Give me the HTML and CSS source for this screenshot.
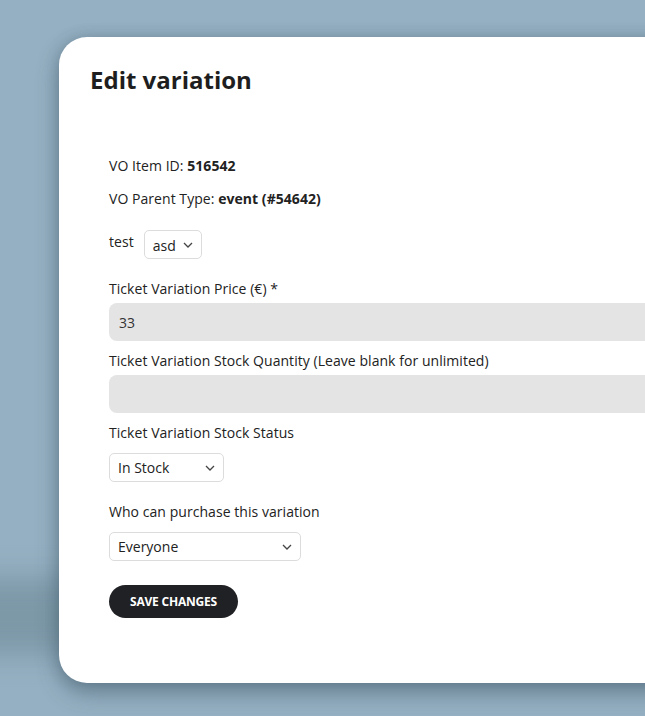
FILE: index.html
```html
<!DOCTYPE html>
<html lang="en">
<head>
<meta charset="UTF-8">
<meta name="viewport" content="width=device-width, initial-scale=1.0">
<link rel="stylesheet" href="styles.css">
</head>
<body>

<!-- page behind the modal, blurred -->
<div class="backdrop-band"></div>

<div class="modal">
  <h1 class="modal-title">Edit variation</h1>

  <form class="variation-form">
    <p class="meta">VO Item ID: <b>516542</b></p>
    <p class="meta">VO Parent Type: <b>event (#54642)</b></p>

    <div class="inline-field">
      <label>test</label>
      <span class="select select-small">
        <select><option>asd</option></select>
        <svg viewBox="0 0 10 6"><path d="M1 1l4 4 4-4"/></svg>
      </span>
    </div>

    <div class="field">
      <label>Ticket Variation Price (€) *</label>
      <input type="text" value="33">
    </div>

    <div class="field">
      <label>Ticket Variation Stock Quantity (Leave blank for unlimited)</label>
      <input type="text" value="">
    </div>

    <div class="field field-select">
      <label>Ticket Variation Stock Status</label>
      <span class="select select-stock">
        <select><option>In Stock</option></select>
        <svg viewBox="0 0 10 6"><path d="M1 1l4 4 4-4"/></svg>
      </span>
    </div>

    <div class="field field-select">
      <label>Who can purchase this variation</label>
      <span class="select select-who">
        <select><option>Everyone</option></select>
        <svg viewBox="0 0 10 6"><path d="M1 1l4 4 4-4"/></svg>
      </span>
    </div>

    <button type="button" class="save-btn">Save changes</button>
  </form>
</div>

</body>
</html>
```

FILE: styles.css
```css
html, body {
  margin: 0;
  height: 100%;
}
body {
  background: #95b0c2;
  font-family: "Open Sans", "Liberation Sans", sans-serif;
  color: #222;
  overflow: hidden;
  position: relative;
}
.backdrop-band {
  position: absolute;
  left: -40px;
  right: 0;
  top: 578px;
  height: 76px;
  background: #7d98a7;
  filter: blur(14px);
}
.modal {
  position: relative;
  margin: 37px 0 0 59px;
  width: 680px;
  height: 646px;
  box-sizing: border-box;
  padding: 27px 0 0 31px;
  background: #fff;
  border-radius: 28px 0 0 28px;
  box-shadow: 0 10px 22px rgba(50, 75, 92, 0.45), 0 0 14px rgba(60, 85, 100, 0.25);
}
.modal-title {
  margin: 0;
  font-size: 24px;
  line-height: 32px;
  font-weight: 700;
  color: #1e1e20;
}
.variation-form {
  padding: 60px 0 0 19px;
  font-size: 14px;
  line-height: 20px;
  letter-spacing: 0.05px;
}
.meta {
  margin: 0 0 13px;
}
.meta b {
  font-weight: 700;
}
.inline-field {
  display: flex;
  align-items: flex-start;
  gap: 10px;
  margin-top: 21px;
  margin-bottom: 20px;
}
.inline-field label {
  padding-top: 2px;
}
.field {
  display: flex;
  flex-direction: column;
  margin-bottom: 10px;
}
.field label {
  margin-bottom: 4px;
}
.field-select {
  margin-bottom: 20px;
}
.field-select label {
  margin-bottom: 10px;
}
.field input {
  height: 38px;
  border: none;
  border-radius: 8px;
  background: #e4e4e4;
  padding: 0 10px;
  font: inherit;
  color: #333;
  width: 560px;
}
.select {
  position: relative;
  display: inline-block;
}
.select select {
  appearance: none;
  -webkit-appearance: none;
  height: 29px;
  box-sizing: border-box;
  border: 1px solid #dcdcdc;
  border-radius: 5px;
  background: #fff;
  padding: 0 0 0 8px;
  font: inherit;
  font-size: 14px;
  color: #222;
}
.select svg {
  position: absolute;
  right: 9px;
  top: 12px;
  width: 10px;
  height: 6px;
  fill: none;
  stroke: #444;
  stroke-width: 1.3;
  pointer-events: none;
}
.select-small select { width: 58px; padding-top: 2px; }
.select-stock select { width: 115px; }
.select-who select { width: 192px; }
.select-stock, .select-who { align-self: flex-start; }
.save-btn {
  margin-top: 4px;
  height: 33px;
  width: 129px;
  border: none;
  border-radius: 17px;
  background: #202124;
  color: #fff;
  font-family: "Open Sans", "Liberation Sans", sans-serif;
  font-weight: 700;
  font-size: 12px;
  letter-spacing: -0.2px;
  text-transform: uppercase;
  cursor: pointer;
}
```
